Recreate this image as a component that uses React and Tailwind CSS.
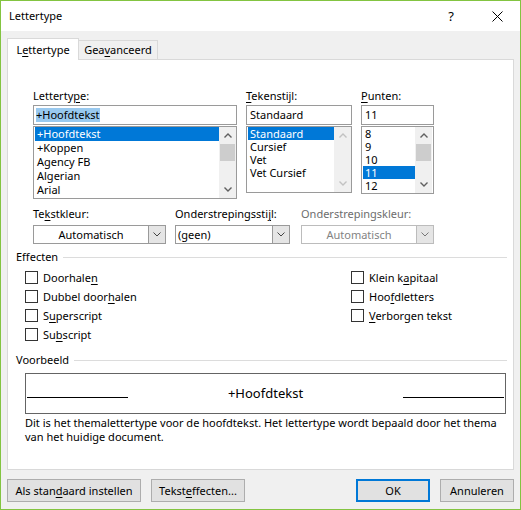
import React from "react";

function U({ children }) {
  return <span className="underline underline-offset-[2px] decoration-[1px]">{children}</span>;
}

function ChevUp({ color = "#606060" }) {
  return (
    <svg width="8" height="5" viewBox="0 0 8 5">
      <path d="M0.5 4.5L4 1L7.5 4.5" fill="none" stroke={color} strokeWidth="1.4" />
    </svg>
  );
}

function ChevDown({ color = "#606060", sw = 1.4 }) {
  return (
    <svg width="8" height="5" viewBox="0 0 8 5">
      <path d="M0.5 0.5L4 4L7.5 0.5" fill="none" stroke={color} strokeWidth={sw} />
    </svg>
  );
}

function Scrollbar({ thumb }) {
  const c = thumb ? "#606060" : "#c2c2c2";
  return (
    <div className="w-[17px] shrink-0 bg-[#f0f0f0] flex flex-col">
      <div className="h-[17px] flex items-center justify-center">
        <ChevUp color={c} />
      </div>
      {thumb ? <div className="h-[17px] mx-[1px] bg-[#cdcdcd]" /> : null}
      <div className="flex-1" />
      <div className="h-[17px] flex items-center justify-center">
        <ChevDown color={c} />
      </div>
    </div>
  );
}

function Row({ text, sel, h }) {
  return (
    <div className={(h === 14 ? "h-[14px] leading-[14px] " : "h-[13px] leading-[13px] ") + "pl-[2px] whitespace-nowrap " + (sel ? "bg-[#0078d7] text-white" : "")}>
      {text}
    </div>
  );
}

function Checkbox({ children }) {
  return (
    <div className="h-[19px] flex items-center gap-[5px]">
      <div className="w-[13px] h-[13px] border border-[#333333] bg-white shrink-0" />
      <div>{children}</div>
    </div>
  );
}

export default function App() {
  return (
    <div className="w-[521px] h-[510px] border border-[#83c441] bg-[#f0f0f0] flex flex-col font-['Noto_Sans',sans-serif] text-[11px] leading-[14px] text-black overflow-hidden">
      {/* Title bar */}
      <div className="h-[30px] bg-white flex items-center shrink-0">
        <div className="pl-[8px] flex-1">Lettertype</div>
        <div className="w-[46px] h-full flex items-center justify-center text-[13px]">?</div>
        <div className="w-[46px] h-full flex items-center justify-center">
          <svg width="11" height="11" viewBox="0 0 11 11">
            <path d="M0.5 0.5L10.5 10.5M10.5 0.5L0.5 10.5" stroke="#000" strokeWidth="1" />
          </svg>
        </div>
      </div>

      <div className="px-[6px] pt-[7px] flex flex-col">
        {/* Tabs */}
        <div className="flex items-end h-[21px]">
          <div className="relative z-10 h-[22px] -mb-px w-[72px] bg-white border-t border-l border-r border-[#d9d9d9] pt-[4px] text-center">
            L<U>e</U>ttertype
          </div>
          <div className="h-[19px] w-[79px] border-t border-r border-[#d9d9d9] pt-[2px] text-center">
            Gea<U>v</U>anceerd
          </div>
        </div>

        {/* Panel */}
        <div className="h-[411px] border border-[#d9d9d9] bg-white pt-[29px] flex flex-col">
          {/* Font, style, size */}
          <div className="flex items-start ml-[25px]">
            <div className="w-[204px] flex flex-col">
              <div className="h-[14px]">Letterty<U>p</U>e:</div>
              <div className="mt-[2px] h-[20px] border border-[#9a9a9a] flex items-center pl-[2px]">
                <span className="bg-[#99c9ef]">+Hoofdtekst</span>
              </div>
              <div className="mt-[1px] h-[73px] border border-[#9a9a9a] flex">
                <div className="flex-1 ml-[1px]">
                  <Row text="+Hoofdtekst" sel h={14} />
                  <Row text="+Koppen" h={14} />
                  <Row text="Agency FB" h={14} />
                  <Row text="Algerian" h={14} />
                  <Row text="Arial" h={14} />
                </div>
                <Scrollbar thumb />
              </div>
            </div>

            <div className="w-[106px] ml-[9px] flex flex-col">
              <div className="h-[14px]"><U>T</U>ekenstijl:</div>
              <div className="mt-[2px] h-[20px] border border-[#9a9a9a] flex items-center pl-[3px]">Standaard</div>
              <div className="mt-[1px] h-[67px] border border-[#9a9a9a] flex">
                <div className="flex-1 ml-[1px]">
                  <Row text="Standaard" sel h={13} />
                  <Row text="Cursief" h={13} />
                  <Row text="Vet" h={13} />
                  <Row text="Vet Cursief" h={13} />
                </div>
                <Scrollbar />
              </div>
            </div>

            <div className="w-[73px] ml-[9px] flex flex-col">
              <div className="h-[14px]"><U>P</U>unten:</div>
              <div className="mt-[2px] h-[20px] border border-[#9a9a9a] flex items-center pl-[3px]">11</div>
              <div className="mt-[1px] h-[68px] border border-[#9a9a9a] flex">
                <div className="flex-1 ml-[1px]">
                  <Row text="8" h={13} />
                  <Row text="9" h={13} />
                  <Row text="10" h={13} />
                  <Row text="11" sel h={13} />
                  <Row text="12" h={13} />
                </div>
                <Scrollbar thumb />
                <div className="w-[1px]" />
              </div>
            </div>
          </div>

          {/* Combos */}
          <div className="flex items-start ml-[25px] mt-[8px]">
            <div className="w-[133px] flex flex-col">
              <div className="h-[14px]">Te<U>k</U>stkleur:</div>
              <div className="mt-[4px] h-[19px] border border-[#9a9a9a] flex">
                <div className="flex-1 flex items-center justify-center">Automatisch</div>
                <div className="w-[17px] bg-[#e5e5e5] border-l border-[#9a9a9a] flex items-center justify-center">
                  <ChevDown color="#444" sw={1} />
                </div>
              </div>
            </div>
            <div className="w-[115px] ml-[9px] flex flex-col">
              <div className="h-[14px] whitespace-nowrap">Onderstrepingssti<U>j</U>l:</div>
              <div className="mt-[4px] h-[19px] border border-[#9a9a9a] flex">
                <div className="flex-1 flex items-center pl-[2px]">(geen)</div>
                <div className="w-[17px] bg-[#e5e5e5] border-l border-[#9a9a9a] flex items-center justify-center">
                  <ChevDown color="#444" sw={1} />
                </div>
              </div>
            </div>
            <div className="w-[133px] ml-[11px] flex flex-col">
              <div className="h-[14px] text-[#6d6d6d] whitespace-nowrap">Onderstrepingskleur:</div>
              <div className="mt-[4px] h-[19px] border border-[#bcbcbc] flex">
                <div className="flex-1 flex items-center justify-center text-[#838383]">Automatisch</div>
                <div className="w-[17px] bg-[#e5e5e5] border-l border-[#bcbcbc] flex items-center justify-center">
                  <ChevDown color="#777" sw={1} />
                </div>
              </div>
            </div>
          </div>

          {/* Effecten */}
          <div className="mt-[6px] h-[14px] flex items-center pl-[8px] pr-[6px]">
            <span>Effecten</span>
            <div className="flex-1 ml-[5px] h-px bg-[#dcdcdc]" />
          </div>
          <div className="mt-[4px] flex pl-[17px]">
            <div className="w-[326px] flex flex-col">
              <Checkbox>Doorhale<U>n</U></Checkbox>
              <Checkbox>Dubbel door<U>h</U>alen</Checkbox>
              <Checkbox>S<U>u</U>perscript</Checkbox>
              <Checkbox>Su<U>b</U>script</Checkbox>
            </div>
            <div className="flex flex-col">
              <Checkbox>Klein k<U>a</U>pitaal</Checkbox>
              <Checkbox>Hoo<U>f</U>dletters</Checkbox>
              <Checkbox><U>V</U>erborgen tekst</Checkbox>
            </div>
          </div>

          {/* Voorbeeld */}
          <div className="mt-[9px] h-[14px] flex items-center pl-[8px] pr-[6px]">
            <span>Voorbeeld</span>
            <div className="flex-1 ml-[5px] h-px bg-[#dcdcdc]" />
          </div>
          <div className="mt-[6px] ml-[17px] w-[481px] h-[41px] border border-[#646464] pt-[11px] px-[1px]">
            <div className="flex items-baseline">
              <div className="w-[101px] h-px bg-black" />
              <div className="flex-1 text-center text-[13px] leading-[17px]">+Hoofdtekst</div>
              <div className="w-[101px] h-px bg-black" />
            </div>
          </div>
          <div className="mt-[2px] ml-[17px] leading-[13.5px] whitespace-nowrap">
            Dit is het themalettertype voor de hoofdtekst. Het lettertype wordt bepaald door het thema
            <br />
            van het huidige document.
          </div>
        </div>

        {/* Buttons */}
        <div className="mt-[9px] flex">
          <div className="w-[134px] h-[23px] bg-[#e1e1e1] border border-[#adadad] flex items-center justify-center">
            Als stan<U>d</U>aard instellen
          </div>
          <div className="ml-[10px] w-[94px] h-[23px] bg-[#e1e1e1] border border-[#adadad] flex items-center justify-center">
            Tekst<U>e</U>ffecten...
          </div>
          <div className="flex-1" />
          <div className="w-[74px] h-[23px] bg-[#e1e1e1] border-2 border-[#0078d7] flex items-center justify-center">
            OK
          </div>
          <div className="ml-[10px] w-[74px] h-[23px] bg-[#e1e1e1] border border-[#adadad] flex items-center justify-center">
            Annuleren
          </div>
        </div>
      </div>
    </div>
  );
}
